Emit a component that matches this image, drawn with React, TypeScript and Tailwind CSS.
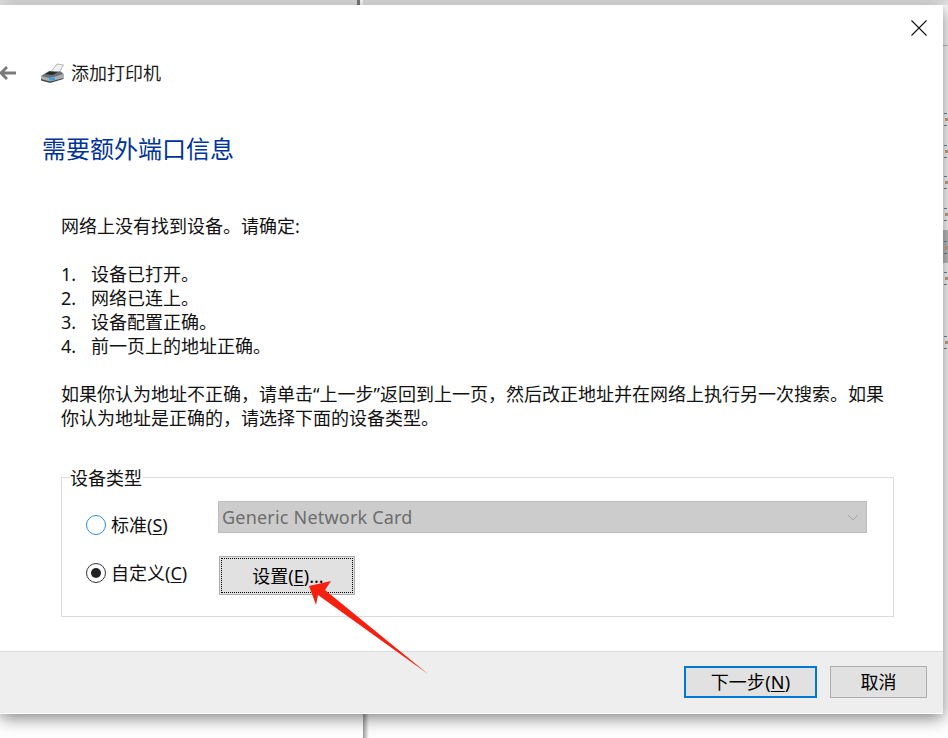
const marks = [113, 145, 176, 208, 241, 272, 336];
const para1 = "如果你认为地址不正确\uFF0C请单击“上一步”返回到上一页\uFF0C然后改正地址并在网络上执行另一次搜索。如果";
const para2 = "你认为地址是正确的\uFF0C请选择下面的设备类型。";

function Key({ k }: { k: string }) {
  return <span className="underline underline-offset-2 decoration-1">{k}</span>;
}

function Btn({ w, primary, focus, children }: { w: string; primary?: boolean; focus?: boolean; children: React.ReactNode }) {
  return (
    <button
      className={`${w} relative h-full bg-[#e1e1e1] text-[18px] text-black flex items-center justify-center ${
        primary ? "border-2 border-[#0078d7]" : "border border-[#adadad]"
      }`}
    >
      {focus && <span className="absolute inset-px border border-dotted border-black" />}
      {children}
    </button>
  );
}

export default function App() {
  return (
    <div className="relative w-[948px] h-[738px] overflow-hidden bg-white font-['Noto_Sans','Noto_Sans_CJK_SC',sans-serif] text-[18px] leading-[24px] text-[#111]">
      {/* windows behind the dialog */}
      <div className="absolute top-0 left-0 w-full h-[5px] bg-gradient-to-b from-[#dcdcdc] to-[#ececec]" />
      <div className="absolute top-0 left-[357px] w-[3px] h-[5px] bg-[#7a7a7a]" />
      <div className="absolute top-0 left-[360px] w-[3px] h-[5px] bg-white" />
      <div className="absolute top-[714px] left-[363px] w-[6px] h-[24px] bg-gradient-to-r from-[#9a9a9a] to-transparent" />
      <div className="absolute top-[45px] left-[943px] w-[5px] h-px bg-[#c4c4c4]" />
      <div className="absolute top-[230px] left-[943px] w-[5px] h-[33px] bg-[#c0c0c0]" />
      {marks.map((y) => (
        <div key={y} className="absolute left-[944px] w-[4px]" style={{ top: y }}>
          <div className="w-[3px] h-px bg-[#6d87a8]" />
          <div className="mt-[4px] ml-px w-[3px] h-[3px] bg-[#c9a98c]" />
          <div className="mt-[4px] w-[3px] h-px bg-[#6d87a8]" />
        </div>
      ))}

      {/* dialog */}
      <div className="relative mt-[5px] w-[943px] h-[709px] flex flex-col bg-white shadow-[0_4px_16px_rgba(0,0,0,0.5)]">
        <div className="relative flex-1">
          <svg className="absolute top-[15px] left-[911px]" width="16" height="16" viewBox="0 0 16 16">
            <path d="M0.5 0.5L15.5 15.5M15.5 0.5L0.5 15.5" stroke="#111" strokeWidth="1.1" fill="none" />
          </svg>

          <div className="mt-[54px] h-[28px] flex items-center">
            <svg width="17" height="16" viewBox="0 0 17 16" className="shrink-0">
              <path d="M7 2L1 8L7 14M1 8H16" stroke="#7a7a7a" strokeWidth="2.8" fill="none" />
            </svg>
            <svg width="24" height="20" viewBox="0 0 24 20" className="ml-[23px] mr-[7px] shrink-0">
              <path d="M10 10L17 1L23.5 2L19 10Z" fill="#f0f0f0" stroke="#9a9a9a" strokeWidth="0.7" />
              <path d="M1 13L9 8L21 8.5L23.5 11V15L10 18.5L1 16.5Z" fill="#6b7074" />
              <path d="M1 13L10 15L23.5 11V15L10 19L1 16.5Z" fill="#a9afb3" />
              <path d="M1 16L10 18.5L23.5 15V16L10 20L1 17.5Z" fill="#45494d" />
              <path d="M5 11L10 8.5L18 9.5L12 12Z" fill="#26292c" />
              <rect x="9" y="14.5" width="6" height="3" fill="#3f9fe0" />
            </svg>
            <span className="text-[18px] text-[#1a1a1a]">添加打印机</span>
          </div>

          <h1 className="mt-[44px] ml-[42px] h-[36px] leading-[36px] text-[24px] font-normal text-[#003399]">需要额外端口信息</h1>

          <div className="mt-[47px] ml-[61px] w-[830px]">
            <p>网络上没有找到设备。请确定:</p>
            <p className="h-[24px]" />
            <ol>
              {["设备已打开。", "网络已连上。", "设备配置正确。", "前一页上的地址正确。"].map((t, i) => (
                <li key={t} className="flex">
                  <span className="w-[30px]">{i + 1}.</span>
                  <span>{t}</span>
                </li>
              ))}
            </ol>
            <p className="h-[24px]" />
            <p className="whitespace-nowrap">{para1}</p>
            <p>{para2}</p>
          </div>

          <div className="relative mt-[47px] ml-[61px] w-[833px] h-[140px] border border-[#dcdcdc] pt-[23px] pl-[24px]">
            <span className="absolute -top-[12px] left-[8px] bg-white pr-px">设备类型</span>

            <div className="flex items-start h-[32px]">
              <div className="w-[132px] flex items-center mt-[12px] gap-[5px]">
                <span className="w-[20px] h-[20px] rounded-full border border-[#2a8fdc] bg-white" />
                <span>
                  标准(<Key k="S" />)
                </span>
              </div>
              <div className="relative w-[649px] h-[32px] bg-[#cccccc] border border-[#bdbdbd] flex items-center pl-[3px] text-[#6d6d6d] tracking-[0.2px]">
                Generic Network Card
                <svg className="absolute right-[7px] top-[12px]" width="12" height="7" viewBox="0 0 12 7">
                  <path d="M1 1L6 6L11 1" stroke="#a3a3a3" strokeWidth="1" fill="none" />
                </svg>
              </div>
            </div>

            <div className="flex items-center h-[39px] mt-[23px]">
              <div className="w-[133px] flex items-center gap-[5px] mb-[5px]">
                <span className="w-[20px] h-[20px] rounded-full border border-[#333] flex items-center justify-center bg-white">
                  <span className="w-[10px] h-[10px] rounded-full bg-[#222]" />
                </span>
                <span>
                  自定义(<Key k="C" />)
                </span>
              </div>
              <Btn w="w-[136px]" focus>
                <span className="ml-[2px]">
                  设置(<Key k="E" />)...
                </span>
              </Btn>
            </div>
          </div>
        </div>

        <div className="h-[63px] shrink-0 bg-[#eeeeee] border-t border-[#dcdcdc] border-b border-b-white pt-[14px] pb-[15px] pr-[16px] flex justify-end gap-[13px]">
          <Btn w="w-[133px]" primary>
            <span className="tracking-[0.2px]">
              下一步(<Key k="N" />)
            </span>
          </Btn>
          <Btn w="w-[97px]">取消</Btn>
        </div>
      </div>

      {/* annotation arrow */}
      <svg className="absolute top-0 left-0 pointer-events-none" width="948" height="738" viewBox="0 0 948 738">
        <polygon points="309,586 331,581 325,590 428,674 318,595 316,605" fill="#f5200f" />
      </svg>
    </div>
  );
}
